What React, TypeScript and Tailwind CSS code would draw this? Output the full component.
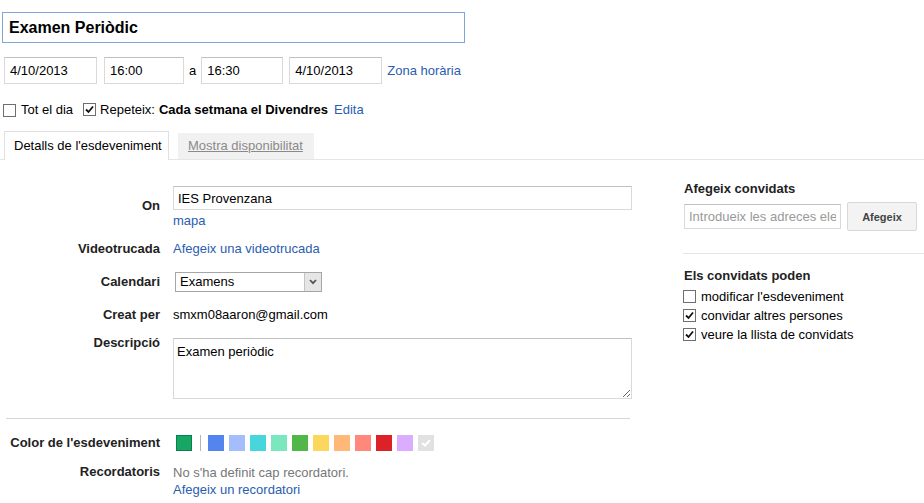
import React from "react";

const font = { fontFamily: '"Liberation Sans", Arial, sans-serif' };

function Check({ checked }: { checked?: boolean }) {
  return (
    <span className="inline-flex h-[13px] w-[13px] shrink-0 items-center justify-center border border-[#6f6f6f] bg-white">
      {checked && (
        <svg width="9" height="9" viewBox="0 0 9 9">
          <path d="M1 4.5 L3.5 7 L8 1.5" fill="none" stroke="#111" strokeWidth="1.8" />
        </svg>
      )}
    </span>
  );
}

const inputCls =
  "h-[27px] border border-[#d9d9d9] border-t-[#c0c0c0] bg-white px-[5px] text-[13px] text-black outline-none";

const swatches = [
  "#5484ed",
  "#a4bdfc",
  "#46d6db",
  "#7ae7bf",
  "#51b749",
  "#fbd75b",
  "#ffb878",
  "#ff887c",
  "#dc2127",
  "#dbadff",
];

export default function App() {
  return (
    <div className="h-[503px] w-[924px] overflow-hidden bg-white text-[13px] leading-[16px] text-[#222]" style={font}>
      {/* title */}
      <div className="pl-[2px] pt-[12px]">
        <input
          className="h-[31px] w-[463px] border border-[#7ea6d8] px-[6px] text-[16px] font-bold text-black outline-none"
          defaultValue="Examen Periòdic"
          readOnly
        />
      </div>

      {/* dates */}
      <div className="mt-[14px] flex items-center pl-[4px]">
        <input className={`${inputCls} w-[93px]`} defaultValue="4/10/2013" readOnly />
        <input className={`${inputCls} ml-[7px] w-[80px]`} defaultValue="16:00" readOnly />
        <span className="ml-[5px] mr-[5px] text-black">a</span>
        <input className={`${inputCls} w-[82px]`} defaultValue="16:30" readOnly />
        <input className={`${inputCls} ml-[6px] w-[93px]`} defaultValue="4/10/2013" readOnly />
        <a className="ml-[5px] text-[#2a5db0]">Zona horària</a>
      </div>

      {/* all day / repeat */}
      <div className="mt-[18px] flex items-center pl-[3px] text-black">
        <Check />
        <span className="ml-[5px]">Tot el dia</span>
        <span className="ml-[10px]">
          <Check checked />
        </span>
        <span className="ml-[4px]">Repeteix:</span>
        <span className="ml-[4px] font-bold">Cada setmana el Divendres</span>
        <a className="ml-[6px] text-[#2a5db0]">Edita</a>
      </div>

      {/* tabs */}
      <div className="mt-[13px] flex items-end border-b border-[#e5e5e5] pl-[4px]">
        <div className="-mb-px flex h-[29px] w-[165px] items-center border border-b-0 border-[#e0e0e0] bg-white pl-[9px] text-black">
          Detalls de l'esdeveniment
        </div>
        <div className="ml-[9px] flex h-[26px] w-[136px] items-center bg-[#f1f1f1] pl-[10px] text-[#8a8a8a] underline">
          Mostra disponibilitat
        </div>
      </div>

      <div className="flex">
        {/* left form */}
        <div className="w-[640px]">
          <div className="mt-[26px] flex">
            <div className="w-[160px] pt-[12px] text-right font-bold">On</div>
            <div className="ml-[13px]">
              <input
                className="h-[24px] w-[459px] border border-[#d9d9d9] border-t-[#c0c0c0] px-[4px] text-[13px] text-black outline-none"
                defaultValue="IES Provenzana"
                readOnly
              />
              <div className="mt-[3px] text-[#2a5db0]">mapa</div>
            </div>
          </div>

          <div className="mt-[12px] flex">
            <div className="w-[160px] text-right font-bold">Videotrucada</div>
            <a className="ml-[13px] text-[#2a5db0]">Afegeix una videotrucada</a>
          </div>

          <div className="mt-[15px] flex items-center">
            <div className="w-[160px] text-right font-bold">Calendari</div>
            <div className="ml-[15px] flex h-[20px] w-[147px] items-center border border-[#a6a6a6] bg-white">
              <span className="flex-1 pl-[4px] text-black">Examens</span>
              <span className="flex h-[18px] w-[17px] items-center justify-center border-l border-[#c4c4c4] bg-[#e6e6e6]">
                <svg width="8" height="6" viewBox="0 0 8 6">
                  <path d="M1 1 L4 4.2 L7 1" fill="none" stroke="#555" strokeWidth="1.8" />
                </svg>
              </span>
            </div>
          </div>

          <div className="mt-[15px] flex">
            <div className="w-[160px] text-right font-bold">Creat per</div>
            <span className="ml-[13px] text-black">smxm08aaron@gmail.com</span>
          </div>

          <div className="mt-[12px] flex">
            <div className="w-[160px] text-right font-bold">Descripció</div>
            <textarea
              className="ml-[13px] mt-[3px] h-[61px] w-[459px] border border-[#d9d9d9] border-t-[#c0c0c0] px-[3px] py-[5px] text-[13px] leading-[16px] text-black outline-none"
              defaultValue="Examen periòdic"
              readOnly
              style={font}
            />
          </div>

          <div className="ml-[6px] mt-[19px] h-px w-[624px] bg-[#d6d6d6]" />

          <div className="mt-[16px] flex items-center">
            <div className="w-[160px] whitespace-nowrap text-right font-bold">Color de l'esdeveniment</div>
            <div className="ml-[16px] flex items-center">
              <span className="h-[16px] w-[16px] border border-[#0b804b] bg-[#16a765]" />
              <span className="ml-[8px] h-[16px] w-px bg-[#b5b5b5]" />
              {swatches.map((c, i) => (
                <span
                  key={c}
                  className={`h-[16px] w-[16px] ${i === 0 ? "ml-[7px]" : "ml-[5px]"}`}
                  style={{ backgroundColor: c }}
                />
              ))}
              <span className="ml-[5px] flex h-[16px] w-[16px] items-center justify-center bg-[#e1e1e1]">
                <svg width="10" height="8" viewBox="0 0 10 8">
                  <path d="M1 4 L4 6.5 L9 1" fill="none" stroke="#fff" strokeWidth="2" />
                </svg>
              </span>
            </div>
          </div>

          <div className="mt-[13px] flex">
            <div className="w-[160px] text-right font-bold">Recordatoris</div>
            <div className="ml-[13px] leading-[17px]">
              <div className="text-[#777]">No s'ha definit cap recordatori.</div>
              <a className="text-[#2a5db0]">Afegeix un recordatori</a>
            </div>
          </div>
        </div>

        {/* right panel */}
        <div className="ml-[44px] flex-1">
          <div className="mt-[21px] font-bold">Afegeix convidats</div>
          <div className="mt-[5px] flex items-center">
            <input
              className="h-[25px] w-[157px] border border-[#d9d9d9] border-t-[#c0c0c0] px-[4px] text-[13px] text-black outline-none placeholder:text-[#999]"
              placeholder="Introdueix les adreces electròniques"
              readOnly
            />
            <button className="ml-[6px] h-[29px] w-[70px] rounded-[2px] border border-[#d8d8d8] bg-[#f3f3f3] text-[11px] font-bold text-[#444]">
              Afegeix
            </button>
          </div>
          <div className="-ml-px mt-[22px] h-px bg-[#e5e5e5]" />
          <div className="mt-[14px] font-bold">Els convidats poden</div>
          <div className="-ml-px mt-[3px]">
            <div className="flex h-[19px] items-center">
              <Check />
              <span className="ml-[5px] text-black">modificar l'esdeveniment</span>
            </div>
            <div className="flex h-[19px] items-center">
              <Check checked />
              <span className="ml-[5px] text-black">convidar altres persones</span>
            </div>
            <div className="flex h-[19px] items-center">
              <Check checked />
              <span className="ml-[5px] text-black">veure la llista de convidats</span>
            </div>
          </div>
        </div>
      </div>
    </div>
  );
}
